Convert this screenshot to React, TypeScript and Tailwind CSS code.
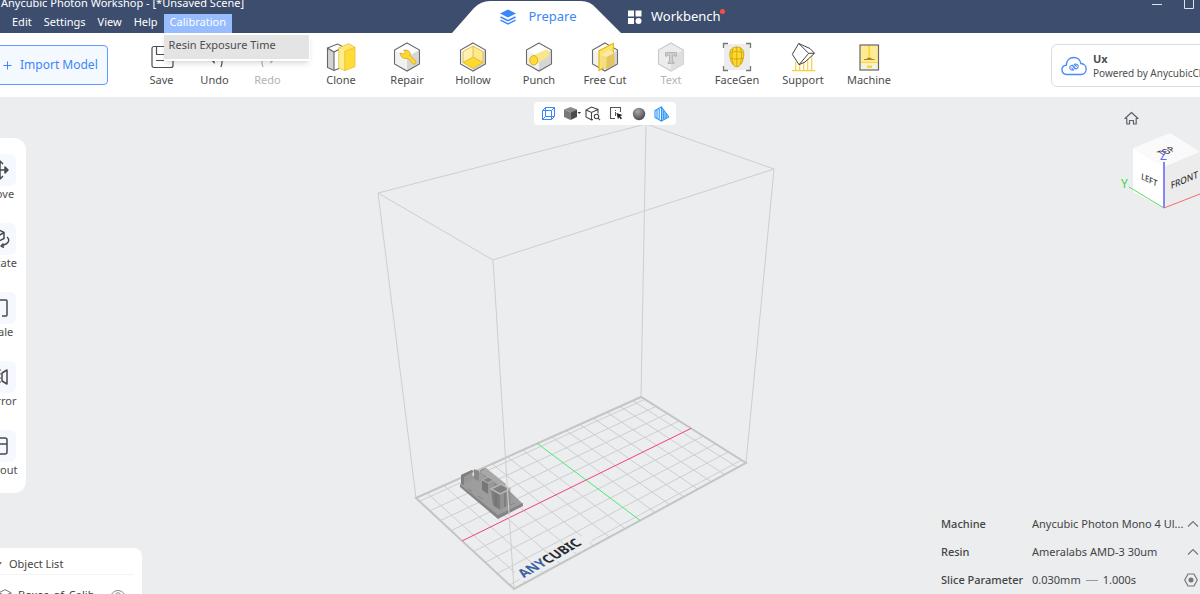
import type { ReactNode } from 'react'

type Point = [number, number]

type Tool = {
  label: string
  icon: ReactNode
  disabled?: boolean
}

const HEX = '16,2 28.5,9 28.5,23 16,30 3.5,23 3.5,9'

function HexShell({ stroke = '#6b6b6b' }: { stroke?: string }) {
  return (
    <>
      <polygon points={HEX} fill="#fff" />
      <polygon points="16,16 28.5,9 28.5,23 16,30" fill="#d6d6d6" />
      <polygon points="16,16 3.5,9 3.5,23 16,30" fill="#f1f1f1" />
      <polygon points={HEX} fill="none" stroke={stroke} strokeWidth="1.1" />
    </>
  )
}

const historyTools: Tool[] = [
  {
    label: 'Save',
    icon: (
      <g fill="none" stroke="#4d4d4d" strokeWidth="1.2">
        <rect x="6" y="5.5" width="21" height="21" rx="2" />
        <path d="M10.5 5.5v8h12v-8M10 19.500h12.500" />
      </g>
    ),
  },
  {
    label: 'Undo',
    icon: <path d="M14 8L9 15l6 6.500v-4M14 8v4c8 0 11 5 8 14" fill="none" stroke="#4d4d4d" strokeWidth="1.2" />,
  },
  {
    label: 'Redo',
    disabled: true,
    icon: <path d="M19 8l6 7-6 6.500v-4M19 8v4c-8 0-11 5-8 14" fill="none" stroke="#b4b4b4" strokeWidth="1.2" />,
  },
]

const modelTools: Tool[] = [
  {
    label: 'Clone',
    icon: (
      <>
        <polygon points="2.500,7 9,11 9,29.500 2.500,26.500" fill="#d4d4d4" />
        <path
          d="M2.500 7l10-4 6 3-9.500 5zM2.500 7v19.500l6.500 3V11M9 29.500l5-2"
          fill="none"
          stroke="#666"
          strokeWidth="1.100"
        />
        <polygon points="13.700,6.700 24,2.700 30,6.300 19.700,10.300" fill="#ffe772" />
        <polygon points="13.700,6.700 19.700,10.300 19.700,29.700 13.700,26.700" fill="#ffeb94" />
        <polygon points="19.700,10.300 30,6.300 30,25.700 19.700,29.700" fill="#ffdc37" />
        <path
          d="M13.700 6.700L24 2.700l6 3.600v19.400l-10.300 4M19.700 10.300v19.400M19.700 10.300l10.300-4M13.700 6.700v20l6 3"
          fill="none"
          stroke="#e3bb20"
          strokeWidth="0.700"
        />
      </>
    ),
  },
  {
    label: 'Repair',
    icon: (
      <>
        <HexShell />
        <path
          d="M9 12l4 1 1.500-2-2-1.500c3-1.200 6.500.3 6.800 3.500l-.2 1.700 5.900 5.600c.8 2-1 3.500-2.800 2.600l-5.700-5.700c-3.600 1-7-1-7.500-5.200z"
          fill="#ffd633"
          stroke="#d0a414"
          strokeWidth="0.800"
        />
      </>
    ),
  },
  {
    label: 'Hollow',
    icon: (
      <>
        <HexShell />
        <polygon points="16,5 26,10.500 26,21.500 16,15.500" fill="#ffe98a" />
        <polygon points="16,5 6,10.500 6,21.500 16,15.500" fill="#fff0b0" />
        <polygon points="16,16 26,21.500 16,27.500 6,21.500" fill="#ffda2e" />
        <path
          d="M16 5v11M6 21.500L16 16l10 5.500M6 21.500l10 6 10-6M6 10.500v11M26 10.500v11M6 10.500L16 5l10 5.500"
          fill="none"
          stroke="#d9b01c"
          strokeWidth="0.700"
        />
      </>
    ),
  },
  {
    label: 'Punch',
    icon: (
      <>
        <HexShell />
        <path d="M9 15l14-6.500c3-.5 4 4 2.500 7L12.500 23.500z" fill="#fbe58b" />
        <ellipse cx="10.700" cy="19.300" rx="4" ry="4.700" fill="#ffdc37" stroke="#d3a70f" strokeWidth="0.900" />
      </>
    ),
  },
  {
    label: 'Free Cut',
    icon: (
      <>
        <HexShell />
        <polygon points="10,9.700 24.300,2.300 24.300,21.500 10,29.500" fill="#ffe468" stroke="#e0b412" strokeWidth="1.100" />
        <polygon points="11.500,14 20,9.500 25.500,12 17.500,16" fill="#f6eab6" />
        <polygon points="11.500,14 17.500,16 17.500,28 11.500,25" fill="#f5de7d" />
        <polygon points="17.500,16 25.500,12 25.500,23.500 17.500,28" fill="#e2c65d" />
      </>
    ),
  },
  {
    label: 'Text',
    disabled: true,
    icon: (
      <>
        <polygon points={HEX} fill="#ececec" stroke="#c9c9c9" strokeWidth="1.100" />
        <polygon points="16,16 28.500,9 28.500,23 16,30" fill="#dedede" />
        <path
          d="M10.500 11.500h11v3.700h-1.500v-1.200h-2.500v7h1.500v1.500h-6V21h1.500v-7H12v1.200h-1.500z"
          fill="#cfcfcf"
          stroke="#acacac"
          strokeWidth="0.800"
        />
      </>
    ),
  },
  {
    label: 'FaceGen',
    icon: (
      <>
        <rect x="3" y="3" width="26" height="26" fill="#ececec" />
        <path d="M2.500 7V2.500H7M25 2.500h4.500V7M29.500 25v4.500H25M7 29.500H2.500V25" fill="none" stroke="#777" strokeWidth="1.300" />
        <path
          d="M15.800 6c4.700 0 7 3 7 7 0 6.500-3 12.700-7 12.700s-7-6.200-7-12.700c0-4 2.300-7 7-7z"
          fill="#ffd92b"
          stroke="#c9a012"
          strokeWidth="0.900"
        />
        <path
          d="M15.800 6v19.500M9 12c4-2 9.500-2 13.500 0M9.500 17c4 1.500 8.500 1.500 12.500 0M12 7.500c-1.500 5-1.500 11 .5 16M19.500 7.500c1.500 5 1.500 11-.5 16"
          fill="none"
          stroke="#c9a012"
          strokeWidth="0.800"
        />
      </>
    ),
  },
  {
    label: 'Support',
    icon: (
      <>
        <path
          d="M5 29.700h23M8.700 29.700V21M12.700 29.700v-7M16.700 29.700V20M20.700 29.700V18M24.700 29.700V15"
          fill="none"
          stroke="#f7cf3c"
          strokeWidth="1.200"
        />
        <path
          d="M11.700 2.500L5.300 13.300 12 23.700l9.700-11.400zM11.700 2.500L23 7.500l4.500 4.800L18 21l-6 2.700M21.700 12.300h5.800"
          fill="#fff"
          stroke="#444"
          strokeWidth="1"
          strokeLinejoin="round"
        />
      </>
    ),
  },
  {
    label: 'Machine',
    icon: (
      <>
        <rect x="7" y="4" width="18.500" height="25" fill="#ffeb96" />
        <rect x="7" y="22" width="18.500" height="7" fill="#f5f1df" />
        <path d="M16.200 4v14" stroke="#ffd533" strokeWidth="1.600" />
        <path d="M7 21.500h18.500" stroke="#ffd533" strokeWidth="1" />
        <path d="M11 18.500h10.500M14 17.300h4.500" stroke="#a98a1c" strokeWidth="1.200" />
        <rect x="14" y="24.500" width="5" height="2.500" fill="#ffd533" />
        <rect x="7" y="4" width="18.500" height="25" fill="none" stroke="#666" strokeWidth="1.200" />
      </>
    ),
  },
]

const transformTools: Tool[] = [
  {
    label: 'Move',
    icon: <path d="M0 10h18M10 1v18M7 4l3-3 3 3M7 16l3 3 3-3M15 7l3 3-3 3z" />,
  },
  {
    label: 'Rotate',
    icon: <path d="M9 1l5 2.500v6L9 12 4 9.500v-6zM9 6.500l5-3M9 6.500V12M17 8c2.500 2 2.500 5-1 7l-5 2 2.500-2.500M11 17l3 1.500" />,
  },
  {
    label: 'Scale',
    icon: <path d="M9 2h7a1 1 0 0 1 1 1v14a1 1 0 0 1-1 1h-4M2 8v9a1 1 0 0 0 1 1h5" />,
  },
  {
    label: 'Mirror',
    icon: (
      <>
        <path d="M17 3v14l-5-3V6z" />
        <path d="M10 2v16" strokeWidth="1" strokeDasharray="2 2" />
        <path d="M3 3v14l5-3V6z" />
      </>
    ),
  },
  {
    label: 'Layout',
    icon: <path d="M4 2h11a2 2 0 0 1 2 2v12a2 2 0 0 1-2 2H4M2 8h15" />,
  },
]

// Build plate, in scene coordinates. u runs along the long side, v along the short one.
const PLATE: { [key: string]: Point } = {
  left: [416, 498],
  back: [641, 397],
  right: [746, 463],
  front: [514, 589],
}

function project(u: number, v: number): Point {
  const [x0, y0] = PLATE.left
  const [x1, y1] = PLATE.back
  const [x2, y2] = PLATE.right
  const [x3, y3] = PLATE.front
  const dx1 = x1 - x2
  const dx2 = x3 - x2
  const dx3 = x0 - x1 + x2 - x3
  const dy1 = y1 - y2
  const dy2 = y3 - y2
  const dy3 = y0 - y1 + y2 - y3
  const det = dx1 * dy2 - dx2 * dy1
  const g = (dx3 * dy2 - dx2 * dy3) / det
  const h = (dx1 * dy3 - dx3 * dy1) / det
  const w = g * u + h * v + 1
  return [
    ((x1 - x0 + g * x1) * u + (x3 - x0 + h * x3) * v + x0) / w,
    ((y1 - y0 + g * y1) * u + (y3 - y0 + h * y3) * v + y0) / w,
  ]
}

function segment(a: Point, b: Point) {
  return `M${a[0].toFixed(1)} ${a[1].toFixed(1)}L${b[0].toFixed(1)} ${b[1].toFixed(1)}`
}

const LENGTH = 153
const DEPTH = 87

const gridLines = [
  ...[-7, -6, -5, -4, -3, -2, -1, 1, 2, 3, 4, 5, 6, 7].map((i) => {
    const u = 0.5 + (i * 10) / LENGTH
    return segment(project(u, 0), project(u, 1))
  }),
  ...[-4, -3, -2, -1, 1, 2, 3, 4].map((i) => {
    const v = 0.5 + (i * 10) / DEPTH
    return segment(project(0, v), project(1, v))
  }),
]

function Scene() {
  return (
    <svg className="absolute inset-0 h-full w-full" viewBox="0 97 1200 497" aria-hidden="true">
      <g fill="none" stroke="#cdcecf" strokeWidth="1">
        <path d="M378 193L646 124L774 169L493 260Z" />
        <path d="M378 193L416 498M646 124L641 397M774 169L746 463" />
        {gridLines.map((d) => (
          <path key={d} d={d} />
        ))}
        <path d="M416 498L641 397L746 463L514 589Z" stroke="#c4c5c6" strokeWidth="2" />
      </g>
      <path d={segment(project(0, 0.5), project(1, 0.5))} stroke="#f23f7c" strokeWidth="1" />
      <path d={segment(project(0.5, 0), project(0.5, 1))} stroke="#4be87c" strokeWidth="1" />

      <polygon points="514,573 584,535 592,541 522,582" fill="#ebedef" />
      <text
        transform="translate(524 578) rotate(-30) skewX(22)"
        fontFamily="'Noto Sans', sans-serif"
        fontSize="13"
        fontWeight="700"
        fill="#2c2c30"
      >
        <tspan fill="#3c60a0">ANY</tspan>CUBIC
      </text>

      {/* calibration model */}
      <polygon points="460,484 486,468 523,504 498,517" fill="#9d9d9d" />
      <polygon points="460,484 498,515 523,503 523,506 498,519 460,487" fill="#858585" />
      <polygon points="461,475 472,470 473,479 462,485" fill="#969696" />
      <polygon points="461,475 472,470 474,471 464,477 464,485 461,484" fill="#7f7f7f" />
      <polygon points="474,469 479,471 479,481 474,479" fill="#888" />
      <polygon points="479,471 484,468 505,484 507,489 503,494" fill="#8b8b8b" />
      <polygon points="480,472 486,468 506,484 501,487" fill="#a8a8a8" />
      <polygon points="482,480 488,483 488,494 482,490" fill="#777" />
      <polygon points="488,483 494,480 494,491 488,494" fill="#989898" />
      <polygon points="482,480 488,477 494,480 488,483" fill="#858585" stroke="#b3b3b3" strokeWidth="1" />
      <polygon points="491,489 500,494 500,510 493,505" fill="#7c7c7c" />
      <polygon points="500,494 510,489 511,503 500,510" fill="#929292" />
      <polygon points="491,489 501,484 510,489 500,494" fill="#818181" stroke="#b5b5b5" strokeWidth="1.500" />
      <path d="M496 494v13M505 493v14" stroke="#6c6c6c" strokeWidth="1" />
      <path d="M468 489l4 2M478 496l5 3M510 505l5-2" stroke="#858585" strokeWidth="1" />

      <path d="M493 260L508 498L514 589" fill="none" stroke="#cdcecf" strokeWidth="1" />
    </svg>
  )
}

function ToolButton({ tool, width }: { tool: Tool; width: string }) {
  return (
    <button
      type="button"
      disabled={tool.disabled}
      className={`${width} flex shrink-0 flex-col items-center pt-2 text-[11px] leading-[13px] ${
        tool.disabled ? 'text-[#b3b3b3]' : 'text-[#4d4d4d]'
      }`}
    >
      <svg width="32" height="32" viewBox="0 0 32 32" aria-hidden="true">
        {tool.icon}
      </svg>
      {tool.label}
    </button>
  )
}

function Header() {
  return (
    <header className="relative z-20 flex h-[33px] shrink-0 justify-between bg-[#3d4d6d] text-white">
      <div className="w-[452px] shrink-0">
        <h1 className="-mt-1 h-[18px] pl-px text-[11px] leading-[14px]">Anycubic Photon Workshop - [*Unsaved Scene]</h1>
        <nav className="flex h-[19px] pl-1.5 text-[11px] leading-4">
          {['Edit', 'Settings', 'View', 'Help'].map((item) => (
            <button key={item} type="button" className="px-1.5 pb-[3px]">
              {item}
            </button>
          ))}
          <div className="relative">
            <button type="button" className="h-[19px] bg-[#98bdff] px-1.5 pb-[3px]">
              Calibration
            </button>
            <div className="absolute top-[19px] left-0 w-[146px] border-y-2 border-r border-white bg-white shadow-md">
              <button
                type="button"
                className="block h-6 w-full bg-[#e4e4e4] pb-1 pl-[5px] text-left text-[11px] text-[#4d4d4d]"
              >
                Resin Exposure Time
              </button>
            </div>
          </div>
        </nav>
      </div>

      <div className="flex flex-1">
        <button type="button" className="relative w-[169px] pl-1 text-[13px] text-[#3c86fb]">
          <svg className="absolute inset-y-0 left-0" width="169" height="33" viewBox="0 0 169 33" aria-hidden="true">
            <path d="M0 33L22 8Q29 1 38 1H129Q138 1 144 8L169 33z" fill="#fff" />
          </svg>
          <span className="relative flex items-center justify-center gap-3">
            <svg width="16" height="16" viewBox="0 0 16 16" aria-hidden="true">
              <path d="M8 .5l8 4-8 4-8-4z" fill="#3c86fb" />
              <path d="M.5 8L8 11.700 15.500 8M.5 11.200L8 15l7.500-3.800" fill="none" stroke="#3c86fb" strokeWidth="1.500" />
            </svg>
            Prepare
          </span>
        </button>
        <button type="button" className="flex items-center gap-2 pl-1.5 text-[13px]">
          <svg width="16" height="16" viewBox="0 0 16 16" fill="#fff" aria-hidden="true">
            <rect x="1" y="1.500" width="6" height="6" />
            <rect x="8.500" y="1.500" width="6" height="6" />
            <rect x="1" y="9" width="6" height="6" />
            <circle cx="11.500" cy="12" r="3" />
          </svg>
          <span className="relative">
            Workbench
            <span className="absolute top-0.5 -right-1 size-[5px] rounded-full bg-[#ff4a4a]" />
          </span>
        </button>
      </div>

      <div className="flex items-start">
        <button type="button" aria-label="Minimize" className="h-[9px] w-8">
          <svg width="12" height="9" viewBox="0 0 12 9" aria-hidden="true">
            <path d="M0 4.500h10" stroke="#dfe3ea" />
          </svg>
        </button>
        <button type="button" aria-label="Maximize" className="h-[9px] w-4">
          <svg width="12" height="9" viewBox="0 0 12 9" aria-hidden="true">
            <path d="M.5 0v8.500h9V0" fill="none" stroke="#dfe3ea" />
          </svg>
        </button>
      </div>
    </header>
  )
}

function Toolbar() {
  return (
    <div className="relative z-10 flex h-16 shrink-0 bg-white">
      <div className="flex w-[135px] shrink-0 items-center">
        <button
          type="button"
          className="-ml-1 flex h-10 w-28 items-center gap-2 rounded border border-[#5c9bff] bg-[#f4f8ff] pl-1.5 text-xs text-[#3c86fb]"
        >
          <svg width="9" height="9" viewBox="0 0 9 9" aria-hidden="true">
            <path d="M.5 4.500h8M4.500.5v8" stroke="#3c86fb" />
          </svg>
          Import Model
        </button>
      </div>
      <div className="mr-3.5 flex">
        {historyTools.map((tool) => (
          <ToolButton key={tool.label} tool={tool} width="w-[53px]" />
        ))}
      </div>
      <div className="flex flex-1">
        {modelTools.map((tool) => (
          <ToolButton key={tool.label} tool={tool} width="w-[66px]" />
        ))}
      </div>
      <button
        type="button"
        className="-mr-2 mt-[11px] flex h-[43px] w-[157px] shrink-0 items-center gap-1.5 overflow-hidden rounded-md border border-[#dcdcdc] pl-[9px] text-left text-[10px] leading-[15px] whitespace-nowrap text-[#4d4d4d]"
      >
        <svg className="shrink-0" width="26" height="20" viewBox="0 0 26 20" fill="none" stroke="#4a8cf7" aria-hidden="true">
          <path
            d="M6 18.500c-3 0-5-2-5-4.700C1 11 3 9.300 5.300 9.200 5.500 4.500 8.600 1.500 12.700 1.500c3.800 0 6.500 2.400 7.200 6 3 .2 5.300 2.500 5.300 5.500 0 3.200-2.200 5.500-5.200 5.500z"
            strokeWidth="1.400"
          />
          <path
            d="M12.500 13.800c-1.800 1-4-.5-3.700-2.600.3-1.800 2.500-2.600 3.900-1.200l2.300 3.500M13.500 8.300c1.800-1 4 .5 3.700 2.600-.3 1.800-2.500 2.600-3.900 1.200L11 8.800M10.500 11.500l2.500 3M15.700 10.500L13 8"
            strokeWidth="1.100"
          />
        </svg>
        <span>
          <strong className="block text-[11px] leading-[15px] font-bold">Ux</strong>
          Powered by AnycubicCloud
        </span>
      </button>
    </div>
  )
}

function ViewBar() {
  return (
    <div className="absolute inset-x-0 top-[5px] flex justify-center pl-2.5">
      <div className="flex h-[23px] w-[142px] items-center justify-center gap-2 rounded bg-white">
        <button type="button" aria-label="Wireframe">
          <svg width="15" height="15" viewBox="0 0 15 15" fill="none" stroke="#3c86fb" aria-hidden="true">
            <path d="M1.500 4.500l3-3h9v9l-3 3h-9zM1.500 4.500h9v9M10.500 4.500l3-3M4.500 1.500v9h9M1.500 13.500l3-3" />
          </svg>
        </button>
        <button type="button" aria-label="View">
          <svg width="17" height="15" viewBox="0 0 17 15" aria-hidden="true">
            <path d="M6.500 1l6.500 2.500-6.500 3L0 3.500z" fill="#8b8b8b" />
            <path d="M0 3.500l6.500 3V14L0 11z" fill="#777" />
            <path d="M13 3.500l-6.500 3V14l6.500-3z" fill="#4b4b4b" />
            <path d="M13.500 6h3.500l-1.800 2z" fill="#333" />
          </svg>
        </button>
        <button type="button" aria-label="Zoom to model" className="-ml-1">
          <svg width="16" height="15" viewBox="0 0 16 15" fill="none" stroke="#444" strokeWidth="1.100" aria-hidden="true">
            <path d="M8 13.500l-1.500.5L1 11V4l5.500-3L13 3.500v4M1 4l5.500 2.500L13 3.500M6.500 6.500V14" />
            <circle cx="11.500" cy="10.500" r="2.200" />
            <path d="M13 12l2 2.200" />
          </svg>
        </button>
        <button type="button" aria-label="Select">
          <svg width="15" height="15" viewBox="0 0 15 15" aria-hidden="true">
            <path d="M6 12.500H1.500v-11h10V6" fill="none" stroke="#555" strokeWidth="1.100" />
            <path d="M6.500 4v1M6.500 6v4" stroke="#555" />
            <path d="M7.500 7l6 2-2.300 1.200 1.800 2-1.200 1-1.800-2-1 2z" fill="#222" />
          </svg>
        </button>
        <button type="button" aria-label="Shaded">
          <svg width="14" height="14" viewBox="0 0 14 14" aria-hidden="true">
            <defs>
              <radialGradient id="ball" cx="0.4" cy="0.3" r="0.7">
                <stop offset="0" stopColor="#aaa" />
                <stop offset="1" stopColor="#4c4c4c" />
              </radialGradient>
            </defs>
            <circle cx="7" cy="7" r="6.200" fill="url(#ball)" />
          </svg>
        </button>
        <button type="button" aria-label="Mirror view">
          <svg width="16" height="16" viewBox="0 0 16 16" fill="none" stroke="#2b93f5" aria-hidden="true">
            <path d="M7.500 1v14L1 11.500V4.500zM3 4v8M5.200 3v10" strokeWidth="1.100" />
            <path d="M7.500 1L15 11l-7.500 4z" fill="#8cc8ff" />
            <path d="M9.700 4.500v9M12 7.500v5" />
          </svg>
        </button>
      </div>
    </div>
  )
}

function NavigationCube() {
  return (
    <div className="flex flex-col items-end pt-3.5">
      <button type="button" aria-label="Home view" className="mr-[61px]">
        <svg width="15" height="14" viewBox="0 0 15 14" fill="none" stroke="#5c6068" strokeWidth="1.200" aria-hidden="true">
          <path d="M1 7.500l6.500-6 6.500 6h-1.800V13H9.500V9.500h-4V13H2.800V7.500z" strokeLinejoin="round" />
        </svg>
      </button>
      <svg
        className="mt-1"
        width="84"
        height="84"
        viewBox="1116 129 84 84"
        fontFamily="'Noto Sans', sans-serif"
        fontWeight="500"
        aria-hidden="true"
      >
        <polygon points="1170,133 1200,152 1164,167 1133,148" fill="#fafafa" />
        <polygon points="1133,148 1164,167 1164,208 1133,192" fill="#fff" />
        <polygon points="1164,167 1200,152 1200,193 1164,208" fill="#ececec" />
        <text transform="translate(1162 156) rotate(-22) skewX(34)" fontSize="8" fill="#333">
          TOP
        </text>
        <text transform="translate(1141 179) rotate(26) skewX(20)" fontSize="8" fill="#333">
          LEFT
        </text>
        <text transform="translate(1171 189) rotate(-23) skewX(-20)" fontSize="9" fill="#333">
          FRONT
        </text>
        <path d="M1129 187L1164 208" stroke="#5fdc5f" />
        <path d="M1164 208L1200 194" stroke="#f56a6a" />
        <path d="M1164 162V208" stroke="#8a85f5" strokeWidth="2" />
        <text x="1160" y="160" fontSize="12" fontWeight="400" fill="#6a64f0">
          Z
        </text>
        <text x="1121" y="188" fontSize="12" fontWeight="400" fill="#3ed83e">
          Y
        </text>
      </svg>
    </div>
  )
}

function Caret() {
  return (
    <svg
      className="ml-0.5 shrink-0"
      width="14"
      height="8"
      viewBox="0 0 14 8"
      fill="none"
      stroke="#777"
      strokeWidth="1.200"
      aria-hidden="true"
    >
      <path d="M2 6.500l5-5 5 5" />
    </svg>
  )
}

function PrintSettings() {
  return (
    <div className="flex w-[259px] flex-col text-[11px] text-[#444]">
      <div className="flex h-7 items-center">
        <label htmlFor="machine" className="w-[91px] font-medium">
          Machine
        </label>
        <select id="machine" className="w-[152px] appearance-none bg-transparent">
          <option>Anycubic Photon Mono 4 Ul...</option>
        </select>
        <Caret />
      </div>
      <div className="flex h-7 items-center">
        <label htmlFor="resin" className="w-[91px] font-medium">
          Resin
        </label>
        <select id="resin" className="w-[152px] appearance-none bg-transparent">
          <option>Ameralabs AMD-3 30um</option>
        </select>
        <Caret />
      </div>
      <div className="flex h-7 items-center">
        <span className="w-[91px] font-medium">Slice Parameter</span>
        <span className="flex w-[152px] items-center gap-[5px]">
          0.030mm
          <span className="h-px w-3 bg-[#999]" />
          1.000s
        </span>
        <button type="button" aria-label="Slice settings">
          <svg width="14" height="14" viewBox="0 0 14 14" aria-hidden="true">
            <path d="M4 1h6l3.300 6L10 13H4L.7 7z" fill="none" stroke="#777" strokeWidth="1.200" strokeLinejoin="round" />
            <circle cx="7" cy="7" r="2.500" fill="#777" />
          </svg>
        </button>
      </div>
    </div>
  )
}

export default function App() {
  return (
    <div className="flex h-screen flex-col overflow-hidden bg-[#ebedef] font-['Noto_Sans',sans-serif]">
      <Header />
      <Toolbar />
      <main className="relative flex min-h-0 flex-1 justify-between">
        <Scene />
        <ViewBar />

        <div className="relative flex flex-col justify-between pt-[41px]">
          <aside className="-ml-[26px] flex w-[52px] flex-col items-center gap-[21px] rounded-xl bg-white pt-4 pb-[15px]">
            {transformTools.map((tool) => (
              <button
                key={tool.label}
                type="button"
                className="flex flex-col items-center text-[11px] leading-4 text-[#4d4d4d]"
              >
                <span className="flex size-8 items-center justify-center rounded-md bg-[#f5f8ff]">
                  <svg
                    width="20"
                    height="20"
                    viewBox="0 0 20 20"
                    fill="none"
                    stroke="#4a4a4a"
                    strokeWidth="1.500"
                    strokeLinejoin="round"
                    aria-hidden="true"
                  >
                    {tool.icon}
                  </svg>
                </span>
                {tool.label}
              </button>
            ))}
          </aside>

          <section className="h-[46px] w-[142px] overflow-hidden rounded-tr-lg bg-white text-[11px] text-[#444]">
            <h2 className="mr-2 flex h-[27px] items-center gap-[7px] border-b border-[#f3f3f3] pt-1.5">
              <svg width="2" height="4" viewBox="0 0 2 4" aria-hidden="true">
                <path d="M0 0h2L0 3z" fill="#777" />
              </svg>
              Object List
            </h2>
            <div className="flex h-10 items-center">
              <svg width="12" height="13" viewBox="0 0 12 13" fill="none" stroke="#777" aria-hidden="true">
                <path d="M5 .7l6 3v6l-6 3-6-3v-6zM-1 3.700l6 3 6-3M5 6.700v6" />
              </svg>
              <span className="ml-1.5 w-[92px]">Boxes_of_Calib</span>
              <svg width="16" height="12" viewBox="0 0 16 12" fill="none" stroke="#888" aria-hidden="true">
                <path d="M1 6c3.500-6 10.500-6 14 0-3.500 6-10.500 6-14 0z" />
                <circle cx="8" cy="6" r="2.300" />
              </svg>
            </div>
          </section>
        </div>

        <div className="relative flex flex-col items-end justify-between">
          <NavigationCube />
          <PrintSettings />
        </div>
      </main>
    </div>
  )
}
